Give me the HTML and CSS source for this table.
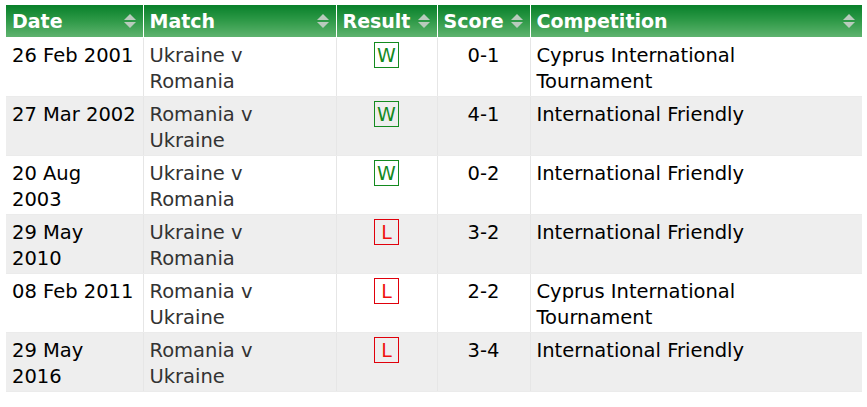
FILE: index.html
```html
<!DOCTYPE html>
<html>
<head>
<meta charset="utf-8">
<link rel="stylesheet" href="styles.css">
</head>
<body>
<table class="results">
  <colgroup>
    <col class="c-date"><col class="c-match"><col class="c-result"><col class="c-score"><col class="c-comp">
  </colgroup>
  <thead>
    <tr>
      <th><div class="th-in"><span>Date</span><span class="sort"><i class="up"></i><i class="down"></i></span></div></th>
      <th><div class="th-in"><span>Match</span><span class="sort"><i class="up"></i><i class="down"></i></span></div></th>
      <th><div class="th-in"><span>Result</span><span class="sort"><i class="up"></i><i class="down"></i></span></div></th>
      <th><div class="th-in"><span>Score</span><span class="sort"><i class="up"></i><i class="down"></i></span></div></th>
      <th><div class="th-in"><span>Competition</span><span class="sort"><i class="up"></i><i class="down"></i></span></div></th>
    </tr>
  </thead>
  <tbody>
    <tr>
      <td class="date">26 Feb 2001</td>
      <td class="match">Ukraine v<br>Romania</td>
      <td class="res"><span class="badge win">W</span></td>
      <td class="score">0-1</td>
      <td class="comp">Cyprus International<br>Tournament</td>
    </tr>
    <tr class="alt">
      <td class="date">27 Mar 2002</td>
      <td class="match">Romania v<br>Ukraine</td>
      <td class="res"><span class="badge win">W</span></td>
      <td class="score">4-1</td>
      <td class="comp">International Friendly</td>
    </tr>
    <tr>
      <td class="date">20 Aug<br>2003</td>
      <td class="match">Ukraine v<br>Romania</td>
      <td class="res"><span class="badge win">W</span></td>
      <td class="score">0-2</td>
      <td class="comp">International Friendly</td>
    </tr>
    <tr class="alt">
      <td class="date">29 May<br>2010</td>
      <td class="match">Ukraine v<br>Romania</td>
      <td class="res"><span class="badge loss">L</span></td>
      <td class="score">3-2</td>
      <td class="comp">International Friendly</td>
    </tr>
    <tr>
      <td class="date">08 Feb 2011</td>
      <td class="match">Romania v<br>Ukraine</td>
      <td class="res"><span class="badge loss">L</span></td>
      <td class="score">2-2</td>
      <td class="comp">Cyprus International<br>Tournament</td>
    </tr>
    <tr class="alt">
      <td class="date">29 May<br>2016</td>
      <td class="match">Romania v<br>Ukraine</td>
      <td class="res"><span class="badge loss">L</span></td>
      <td class="score">3-4</td>
      <td class="comp">International Friendly</td>
    </tr>
  </tbody>
</table>
</body>
</html>
```

FILE: styles.css
```css
html, body {
  margin: 0;
  padding: 0;
  background: #ffffff;
}
body {
  padding: 5px 5px 0 6px;
  font-family: "DejaVu Sans", Verdana, sans-serif;
  font-size: 19.5px;
  color: #000;
}
.results {
  width: 856px;
  table-layout: fixed;
  border-collapse: collapse;
  border-spacing: 0;
}
.c-date { width: 137px; }
.c-match { width: 193px; }
.c-result { width: 101px; }
.c-score { width: 93px; }
.c-comp { width: 332px; }

.results th {
  height: 32px;
  padding: 0 0 0 6px;
  background: linear-gradient(to bottom, #08802a 0%, #2f9a48 50%, #5fb36f 100%);
  color: #fff;
  font-size: 19px;
  font-weight: bold;
  text-align: left;
  border-left: 1px solid #ffffff;
  border-bottom: 1px solid #ffffff;
  vertical-align: middle;
  line-height: 32px;
  white-space: nowrap;
}
.results th:first-child { border-left: none; }
.th-in {
  display: flex;
  align-items: center;
  justify-content: space-between;
  padding-right: 7px;
}
.sort {
  display: flex;
  flex-direction: column;
  align-items: center;
  gap: 2px;
  width: 12px;
  flex: none;
}
.sort i {
  display: block;
  width: 0;
  height: 0;
  border-left: 6px solid transparent;
  border-right: 6px solid transparent;
}
.sort .up { border-bottom: 6px solid #b9cbbd; }
.sort .down { border-top: 6px solid #b9cbbd; }

.results td {
  padding: 5px 6px 1px 6px;
  line-height: 26px;
  vertical-align: top;
  border-left: 1px solid #e6e6e6;
  border-bottom: 1px solid #ebebeb;
  height: 52px;
  white-space: nowrap;
}
.results td:first-child { border-left: none; }
.results tr.alt td { background: #eeeeee; }
.date { color: #000; }
.match { color: #333; }
.score { text-align: center; color: #000; }
.comp { color: #000; }
.results td.res { text-align: center; padding-top: 4px; }
.badge {
  display: inline-block;
  vertical-align: top;
  box-sizing: border-box;
  width: 25px;
  height: 26px;
  line-height: 24px;
  text-align: center;
  font-size: 19px;
}
.badge.win { border: 1px solid #138a1f; color: #138a1f; }
.badge.loss { border: 1px solid #e0000b; color: #f01010; }
```
